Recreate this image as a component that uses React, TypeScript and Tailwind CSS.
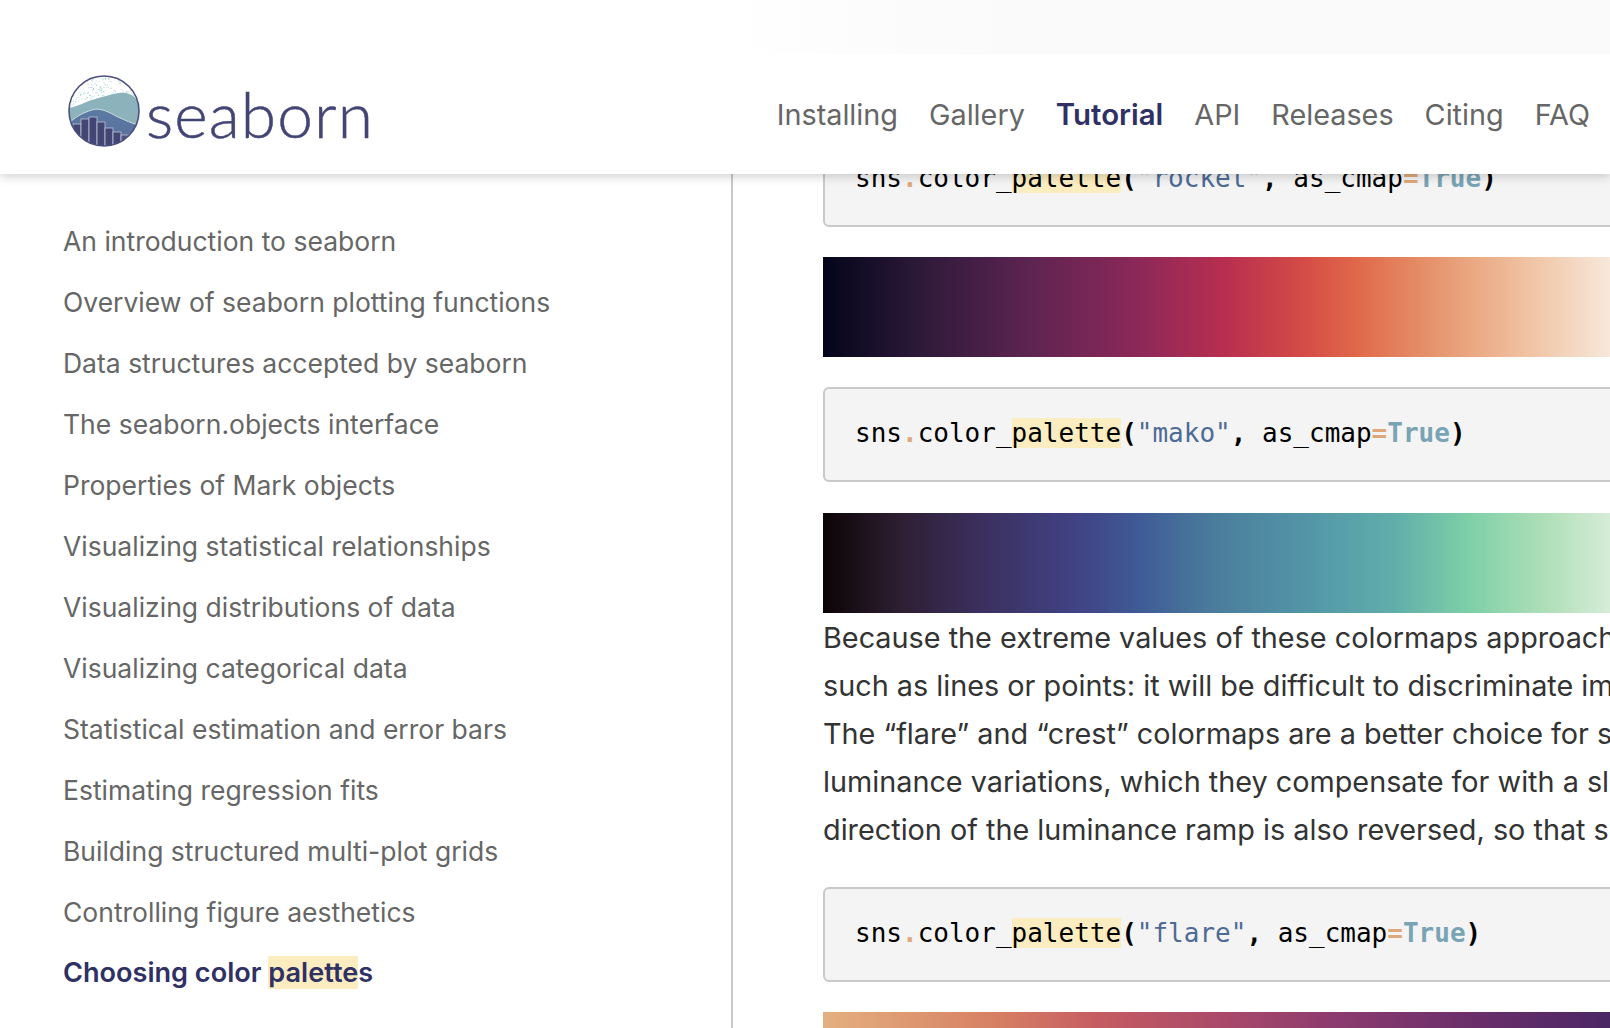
const sidebar = [
  "An introduction to seaborn",
  "Overview of seaborn plotting functions",
  "Data structures accepted by seaborn",
  "The seaborn.objects interface",
  "Properties of Mark objects",
  "Visualizing statistical relationships",
  "Visualizing distributions of data",
  "Visualizing categorical data",
  "Statistical estimation and error bars",
  "Estimating regression fits",
  "Building structured multi-plot grids",
  "Controlling figure aesthetics",
];

const nav = ["Installing", "Gallery", "Tutorial", "API", "Releases", "Citing", "FAQ"];

const dots: [number, number, number][] = [];
for (let i = 0; i < 260; i++) {
  const a = Math.sin(i * 12.9898) * 43758.5453;
  const b = Math.sin(i * 78.233) * 12543.123;
  const c = Math.sin(i * 39.425) * 24634.634;
  dots.push([(a - Math.floor(a)) * 72, (b - Math.floor(b)) * 34, c - Math.floor(c)]);
}

function Logo() {
  return (
    <svg width="72" height="72" viewBox="0 0 72 72" className="shrink-0 mb-[7px]">
      <defs>
        <clipPath id="c">
          <circle cx="36" cy="36" r="35" />
        </clipPath>
        <linearGradient id="w" x1="0" y1="0" x2="0" y2="1">
          <stop offset="0" stopColor="#5a7ba4" />
          <stop offset="1" stopColor="#5b6c9b" />
        </linearGradient>
      </defs>
      <g clipPath="url(#c)">
        <rect width="72" height="72" fill="#ffffff" />
        {dots.map(([x, y, o], i) => (
          <circle key={i} cx={x} cy={y} r="0.6" fill="#8fc8bd" opacity={0.35 + o * 0.6} />
        ))}
        <path d="M0 33C10 32 20 25 31 23C42 20 50 17 58 18C64 19 68 23 72 28V72H0Z" fill="#8cb2bb" />
        <path d="M0 50C5 43 14 38 24 35C33 32 42 38 50 42C57 45 64 49 72 50V72H0Z" fill="url(#w)" />
        <path d="M0 50C5 43 14 38 24 35C33 32 42 38 50 42C57 45 64 49 72 50" fill="none" stroke="#dfe8ee" strokeWidth="0.8" />
        <g fill="#434574" stroke="#bfc4da" strokeWidth="0.8">
          <rect x="5" y="49" width="8" height="24" />
          <rect x="13" y="44" width="8" height="29" />
          <rect x="21" y="42" width="8" height="31" />
          <rect x="29" y="47" width="8" height="26" />
          <rect x="37" y="53" width="8" height="20" />
          <rect x="45" y="57" width="8" height="16" />
          <rect x="53" y="60" width="9" height="13" fill="#4f5685" />
        </g>
      </g>
      <circle cx="36" cy="36" r="35" fill="none" stroke="#4d4f7f" strokeWidth="1.6" />
    </svg>
  );
}

function Code({ name }: { name: string }) {
  return (
    <div className="w-[830px] h-[95px] flex items-center pl-[30px] pb-[3px] border-2 border-[#c9c9c9] rounded-[6px] bg-[#f4f4f4] overflow-hidden whitespace-nowrap font-['DejaVu_Sans_Mono',monospace] text-[26px] leading-[30px] text-black">
      <span>sns</span>
      <span className="text-[#dfa87a] font-bold">.</span>
      <span>color_</span>
      <span className="bg-[#fbedc0]">palette</span>
      <span className="font-bold">(</span>
      <span className="text-[#4c6b96]">"{name}"</span>
      <span className="font-bold">,</span>
      <span>&nbsp;as_cmap</span>
      <span className="text-[#dfa87a] font-bold">=</span>
      <span className="text-[#78a4b4] font-bold">True</span>
      <span className="font-bold">)</span>
    </div>
  );
}

export default function App() {
  return (
    <div className="h-[1028px] w-[1610px] overflow-hidden bg-white font-['Inter',sans-serif]">
      <div className="h-[54px] bg-[linear-gradient(90deg,#ffffff_45%,#fafafa_62%)]" />
      <header className="relative z-10 h-[120px] bg-white shadow-[0_2px_10px_rgba(0,0,0,0.2)] [clip-path:inset(0_0_-30px_0)] flex items-center justify-between pl-[68px] pr-[20px]">
        <div className="flex items-center gap-[6px]">
          <Logo />
          <span className="font-['Lato',sans-serif] font-light text-[64px] leading-none tracking-[1.1px] text-[#434575] [-webkit-text-stroke:0.5px_#434575]">seaborn</span>
        </div>
        <nav className="flex items-center gap-[31px] pt-[2px] text-[28.8px] leading-[40px] text-[#666666]">
          {nav.map((n) => (
            <span key={n} className={n === "Tutorial" ? "font-semibold text-[29.4px] text-[#2f3063]" : ""}>
              {n}
            </span>
          ))}
        </nav>
      </header>
      <div className="flex h-[854px]">
        <aside className="w-[733px] shrink-0 border-r-2 border-[#c9c9c9] pl-[63px] pt-[36.5px] text-[26.5px] leading-[61px] text-[#666666]">
          {sidebar.map((s) => (
            <div key={s}>{s}</div>
          ))}
          <div className="font-semibold text-[27.1px] -mt-[0.5px] text-[#2f3063]">
            Choosing color <span className="bg-[#fbedc0]">palette</span>s
          </div>
        </aside>
        <main className="flex-1 min-w-0 pl-[90px] -mt-[42px] text-[28.8px] leading-[48px] text-[#333333] whitespace-nowrap">
          <Code name="rocket" />
          <div className="w-[787px] h-[100px] mt-[30px] bg-[linear-gradient(90deg,#03051a_0%,#2e1a3a_12.7%,#5e2451_26.4%,#8c2858_40%,#b82e50_51%,#d44b46_61%,#e0694a_68%,#e6966f_78%,#efbd9b_88%,#f7e8da_100%)]" />
          <div className="mt-[30px]">
            <Code name="mako" />
          </div>
          <div className="w-[787px] h-[100px] mt-[31px] bg-[linear-gradient(90deg,#0b0405_0%,#2e1f33_10%,#3b2f5e_20%,#414487_33%,#3f5a96_40%,#4a7c9c_49.5%,#5499a8_63%,#60aeaa_72.5%,#7ecfa8_82%,#b0dfb8_92%,#d6ecd8_100%)]" />
          <div className="mt-[1px]">
            <div>Because the extreme values of these colormaps approach white, they are not well-suited for plotting elements</div>
            <div>such as lines or points: it will be difficult to discriminate important values against a white or gray background.</div>
            <div>The “flare” and “crest” colormaps are a better choice for such contexts. They have a more restricted range of</div>
            <div>luminance variations, which they compensate for with a slightly more pronounced variation in hue. The default</div>
            <div>direction of the luminance ramp is also reversed, so that smaller values have lighter colors:</div>
          </div>
          <div className="mt-[33px]">
            <Code name="flare" />
          </div>
          <div className="w-[787px] h-[100px] mt-[30px] bg-[linear-gradient(90deg,#e4b07f_0%,#d77f63_22%,#c55c62_35%,#ab4a6a_50%,#8a3a6e_66%,#6b2f6b_82%,#4b2764_100%)]" />
        </main>
      </div>
    </div>
  );
}
